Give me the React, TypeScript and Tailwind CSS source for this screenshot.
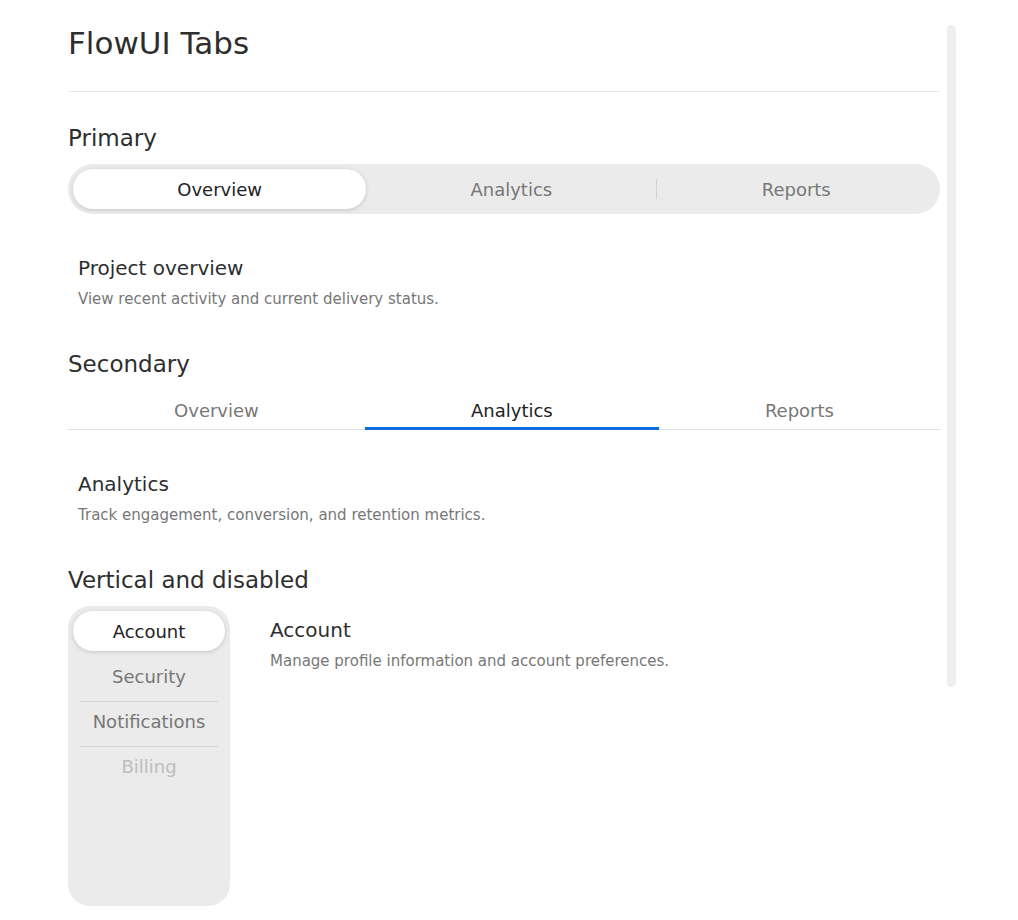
import { useState } from "react";

const FONT = { fontFamily: '"DejaVu Sans", Verdana, sans-serif' };

type Tab = { id: string; label: string; title: string; body: string; disabled?: boolean };

const mainTabs: Tab[] = [
  { id: "overview", label: "Overview", title: "Project overview", body: "View recent activity and current delivery status." },
  { id: "analytics", label: "Analytics", title: "Analytics", body: "Track engagement, conversion, and retention metrics." },
  { id: "reports", label: "Reports", title: "Reports", body: "Export summaries and scheduled reports." },
];

const sideTabs: Tab[] = [
  { id: "account", label: "Account", title: "Account", body: "Manage profile information and account preferences." },
  { id: "security", label: "Security", title: "Security", body: "Update password and two-factor settings." },
  { id: "notifications", label: "Notifications", title: "Notifications", body: "Choose which alerts you receive." },
  { id: "billing", label: "Billing", title: "Billing", body: "Billing is unavailable.", disabled: true },
];

function Panel({ tab, className = "" }: { tab: Tab; className?: string }) {
  return (
    <div className={`px-[10px] pb-[9px] pt-[10px] ${className}`}>
      <h3 className="text-[20px] leading-[30px] text-[#2e2e2e]">{tab.title}</h3>
      <p className="mt-[5px] text-[15px] leading-[22px] text-[#777]">{tab.body}</p>
    </div>
  );
}

function SectionTitle({ children }: { children: string }) {
  return <h2 className="text-[23px] leading-[34px] text-[#2e2e2e]">{children}</h2>;
}

function PrimaryTabs() {
  const [active, setActive] = useState(0);
  return (
    <div>
      <div className="mt-[9px] flex h-[50px] rounded-full bg-[#ebebeb] p-[5px]">
        {mainTabs.map((t, i) => {
          const on = i === active;
          const sep = i > 0 && i !== active && i - 1 !== active;
          return (
            <div key={t.id} className="flex flex-auto items-center">
              {sep && <span className="h-[20px] w-px bg-[#d2d2d2]" />}
              <button
                type="button"
                onClick={() => setActive(i)}
                className={`h-full flex-auto rounded-full text-[18px] ${
                  on ? "bg-white text-[#222] shadow-[0_1px_4px_rgba(0,0,0,0.16)]" : "text-[#777]"
                }`}
              >
                {t.label}
              </button>
            </div>
          );
        })}
      </div>
      <Panel tab={mainTabs[active]} className="mt-[29px]" />
    </div>
  );
}

function SecondaryTabs() {
  const [active, setActive] = useState(1);
  return (
    <div>
      <div className="mt-[9px] flex h-[40px] border-b border-[#e2e2e2]">
        {mainTabs.map((t, i) => (
          <button
            key={t.id}
            type="button"
            onClick={() => setActive(i)}
            className={`-mb-px h-[40px] flex-auto border-b-[3px] pt-[4px] text-[18px] ${
              i === active ? "border-[#0b6fde] text-[#222]" : "border-transparent text-[#777]"
            }`}
          >
            {t.label}
          </button>
        ))}
      </div>
      <Panel tab={mainTabs[active]} className="mt-[29px]" />
    </div>
  );
}

function VerticalTabs() {
  const [active, setActive] = useState(0);
  return (
    <div className="mt-[9px] flex">
      <div className="flex h-[300px] w-[162px] shrink-0 flex-col gap-[5px] rounded-[22px] bg-[#ebebeb] p-[5px]">
        {sideTabs.map((t, i) => {
          const on = i === active;
          const sep = i > 0 && i !== active && i - 1 !== active;
          return (
            <div key={t.id} className={`h-[40px] ${on ? "" : "px-[7px]"}`}>
              <button
                type="button"
                disabled={t.disabled}
                onClick={() => setActive(i)}
                className={`h-full w-full border-t text-[18px] ${
                  sep ? "border-[#d6d6d6]" : "border-transparent"
                } ${
                  on
                    ? "rounded-full bg-white text-[#222] shadow-[0_1px_4px_rgba(0,0,0,0.16)]"
                    : t.disabled
                      ? "cursor-not-allowed text-[#bdbdbd]"
                      : "text-[#777]"
                }`}
              >
                {t.label}
              </button>
            </div>
          );
        })}
      </div>
      <Panel tab={sideTabs[active]} className="-mt-px ml-[30px]" />
    </div>
  );
}

export default function App() {
  return (
    <div className="relative min-h-[920px] bg-white" style={FONT}>
      <div className="ml-[68px] w-[872px] pt-[25px]">
        <h1 className="text-[31px] leading-[36px] text-[#2e2e2e]">FlowUI Tabs</h1>
        <hr className="mt-[30px] border-[#e6e6e6]" />

        <section className="mt-[29px]">
          <SectionTitle>Primary</SectionTitle>
          <PrimaryTabs />
        </section>

        <section className="mt-[28px]">
          <SectionTitle>Secondary</SectionTitle>
          <SecondaryTabs />
        </section>

        <section className="mt-[28px]">
          <SectionTitle>Vertical and disabled</SectionTitle>
          <VerticalTabs />
        </section>
      </div>

      {/* scrollbar thumb */}
      <div className="absolute left-[947px] top-[25px] h-[662px] w-[9px] rounded-full bg-[#efefef]" />
    </div>
  );
}
